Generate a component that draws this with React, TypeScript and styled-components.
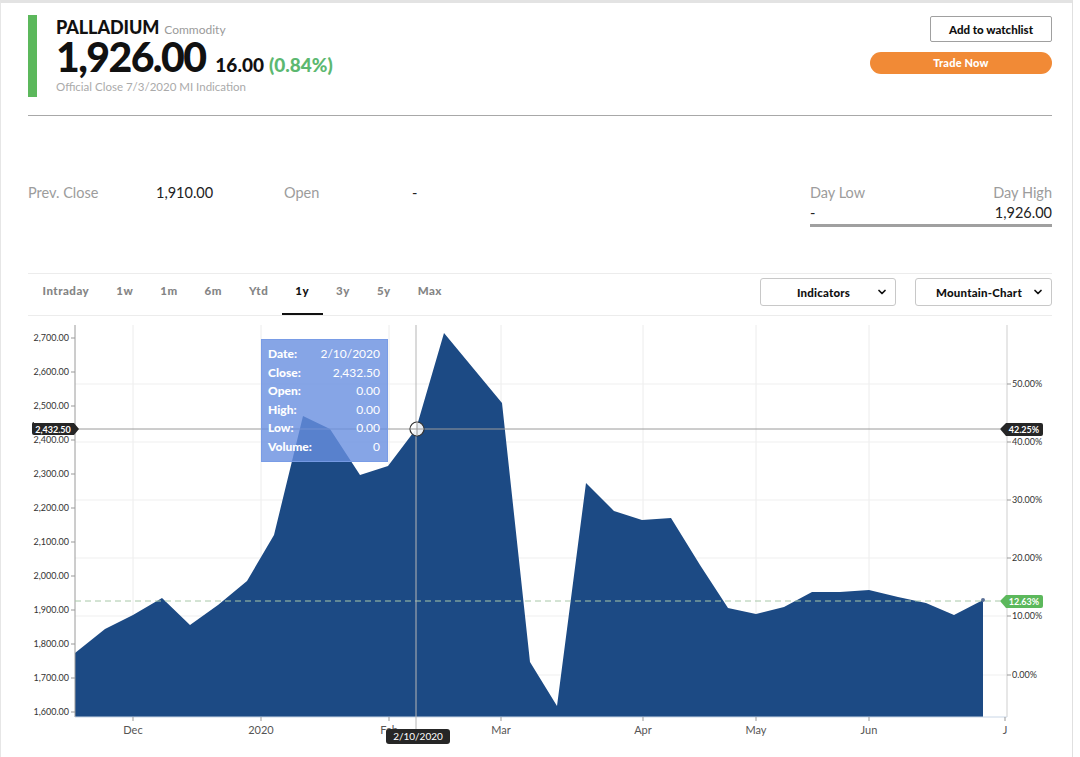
import React from "react";
import styled, { createGlobalStyle } from "styled-components";
import { ChevronDown } from "lucide-react";

const GlobalStyle = createGlobalStyle`
  html, body {
    margin: 0;
    padding: 0;
    background: #fff;
  }
  body {
    font-family: Lato, "Open Sans", sans-serif;
    color: #111;
  }
`;

const Frame = styled.div`
  width: 1073px;
  height: 757px;
  box-sizing: border-box;
  border-top: 3px solid #e3e3e3;
  border-left: 1px solid #e6e6e6;
  border-right: 1px solid #e0e0e0;
  padding: 0 20px 0 27px;
  overflow: hidden;
`;

const Header = styled.header`
  display: flex;
  justify-content: space-between;
  height: 113px;
  box-sizing: border-box;
  padding-top: 12px;
  border-bottom: 1px solid #a8a8a8;
`;

const Quote = styled.div`
  display: flex;
  gap: 19px;
`;

const AccentBar = styled.div`
  width: 9px;
  height: 82px;
  background: #5cb85c;
`;

const Titles = styled.div`
  display: flex;
  flex-direction: column;
`;

const NameRow = styled.div`
  display: flex;
  align-items: baseline;
  gap: 5px;
  margin-top: 1px;
  height: 22px;
  line-height: 22px;
`;

const Name = styled.span`
  font-size: 18px;
  font-weight: 900;
  letter-spacing: -0.1px;
`;

const Kind = styled.span`
  font-size: 12px;
  line-height: 1;
  color: #9a9a9a;
`;

const PriceRow = styled.div`
  display: flex;
  align-items: baseline;
  gap: 10px;
  height: 38px;
  line-height: 38px;
`;

const Price = styled.span`
  font-size: 41px;
  font-weight: 900;
  letter-spacing: -1.6px;
`;

const Change = styled.span<{ $up?: boolean }>`
  font-size: 19px;
  font-weight: 900;
  line-height: 1;
  color: ${(p) => (p.$up ? "#5cb870" : "#111")};
  margin-left: ${(p) => (p.$up ? "-5px" : "0")};
`;

const Note = styled.div`
  font-size: 11.5px;
  line-height: 14px;
  color: #aaa;
  margin-top: 4px;
`;

const Actions = styled.div`
  display: flex;
  flex-direction: column;
  align-items: flex-end;
  gap: 10px;
  padding-top: 1px;
`;

const WatchButton = styled.button`
  width: 122px;
  height: 26px;
  border: 1px solid #a0a0a0;
  border-radius: 2px;
  background: #fff;
  font-family: Lato, sans-serif;
  font-size: 11.5px;
  font-weight: 900;
  color: #111;
  padding: 0;
`;

const TradeButton = styled.button`
  width: 182px;
  height: 22px;
  border: none;
  border-radius: 11px;
  background: #f18a36;
  font-family: Lato, sans-serif;
  font-size: 11px;
  font-weight: 900;
  letter-spacing: 0.2px;
  color: #fff;
  padding: 0 0 1px;
`;

const Stats = styled.section`
  display: flex;
  justify-content: space-between;
  height: 157px;
  box-sizing: border-box;
  padding-top: 67px;
`;

const StatGrid = styled.div`
  display: grid;
  grid-template-columns: repeat(4, 128px);
  font-size: 14.5px;
  line-height: 20px;
  height: 20px;
`;

const StatText = styled.span<{ $label?: boolean }>`
  color: ${(p) => (p.$label ? "#9c9c9c" : "#222")};
`;

const DayRange = styled.div`
  width: 242px;
  font-size: 14.5px;
  line-height: 20px;
`;

const RangeRow = styled.div`
  display: flex;
  justify-content: space-between;
`;

const RangeBar = styled.div`
  height: 3px;
  margin-top: 1px;
  background: #a0a0a0;
`;

const TabsBar = styled.div`
  display: flex;
  justify-content: space-between;
  height: 43px;
  box-sizing: border-box;
  border-top: 1px solid #ececec;
  border-bottom: 1px solid #ececec;
`;

const Tabs = styled.div`
  display: flex;
  padding-left: 1px;
`;

const Tab = styled.div<{ $active?: boolean }>`
  height: 41px;
  box-sizing: border-box;
  padding: 10px 13.5px 0;
  font-size: 11.5px;
  font-weight: 900;
  letter-spacing: 0.5px;
  line-height: 14px;
  color: ${(p) => (p.$active ? "#111" : "#858585")};
  border-bottom: 2px solid ${(p) => (p.$active ? "#111" : "transparent")};
`;

const Selects = styled.div`
  display: flex;
  gap: 19px;
  padding-top: 4px;
`;

const Select = styled.div<{ $w: number }>`
  width: ${(p) => p.$w}px;
  height: 28px;
  box-sizing: border-box;
  border: 1px solid #c8c8c8;
  border-radius: 3px;
  display: grid;
  grid-template-columns: 1fr auto;
  align-items: center;
  padding: 0 7px 0 10px;
  font-size: 11.5px;
  font-weight: 900;
  letter-spacing: 0.2px;
  color: #111;
  text-align: center;
`;

const ChartWrap = styled.div`
  position: relative;
  height: 441px;
`;

const Tooltip = styled.div`
  position: absolute;
  left: 233px;
  top: 23px;
  width: 127px;
  height: 123px;
  box-sizing: border-box;
  padding: 5px 7px 0 6px;
  background: rgba(104, 142, 224, 0.8);
  border: 1px solid rgba(120, 155, 230, 0.9);
  color: #fff;
  font-size: 12px;
  font-weight: 900;
  line-height: 18.5px;
`;

const TipRow = styled.div`
  display: flex;
  justify-content: space-between;
`;

const TipValue = styled.span`
  font-weight: 400;
`;

const points: [number, number][] = [
  [75, 653], [105, 629], [133, 615], [162, 598], [190, 625], [218, 605],
  [247, 581], [274, 535], [303, 416], [330, 429], [360, 475], [388, 466],
  [416, 429], [444, 333], [502, 403], [530, 662], [557, 706], [586, 483],
  [614, 511], [642, 520], [671, 518], [700, 565], [728, 608], [756, 614],
  [784, 607], [812, 592], [840, 592], [869, 590], [898, 597], [926, 603],
  [954, 615], [983, 600],
];

const leftTicks = [
  "2,700.00", "2,600.00", "2,500.00", "2,400.00", "2,300.00", "2,200.00",
  "2,100.00", "2,000.00", "1,900.00", "1,800.00", "1,700.00", "1,600.00",
];

const rightTicks: [string, number][] = [
  ["50.00%", 384], ["40.00%", 442], ["30.00%", 500],
  ["20.00%", 558], ["10.00%", 616], ["0.00%", 675],
];

const months: [string, number][] = [
  ["Dec", 133], ["2020", 261], ["Feb", 389], ["Mar", 501],
  ["Apr", 643], ["May", 756], ["Jun", 869], ["J", 1005],
];

const tipRows: [string, string][] = [
  ["Date:", "2/10/2020"], ["Close:", "2,432.50"], ["Open:", "0.00"],
  ["High:", "0.00"], ["Low:", "0.00"], ["Volume:", "0"],
];

const Chart = () => {
  const area =
    "M75,717 " + points.map(([x, y]) => `L${x},${y}`).join(" ") + " L983,717 Z";
  return (
    <svg width={1024} height={441} viewBox="28 316 1024 441" style={{ display: "block" }}>
      {months.slice(0, 7).map(([m, x]) => (
        <line key={m} x1={x} y1={325} x2={x} y2={717} stroke="#ececec" />
      ))}
      {rightTicks.map(([t, y]) => (
        <line key={t} x1={75} y1={y} x2={1007} y2={y} stroke="#efefef" />
      ))}
      <path d={area} fill="#1c4a84" />
      <circle cx={983} cy={600} r={2} fill="#5a6f96" />

      <line x1={75} y1={325} x2={75} y2={717} stroke="#9a9a9a" />
      <line x1={1007} y1={325} x2={1007} y2={717} stroke="#cfcfcf" />
      <line x1={75} y1={717} x2={1007} y2={717} stroke="#c9d6e6" />

      <g fontFamily="Lato, sans-serif" fontSize={9} fill="#333">
        {leftTicks.map((t, i) => {
          const y = 338 + i * 34;
          return (
            <g key={t}>
              <line x1={71} y1={y} x2={75} y2={y} stroke="#999" />
              <text x={69} y={y + 3} textAnchor="end">{t}</text>
            </g>
          );
        })}
        {rightTicks.map(([t, y]) => (
          <g key={t}>
            <line x1={1007} y1={y} x2={1011} y2={y} stroke="#999" />
            <text x={1012} y={y + 3}>{t}</text>
          </g>
        ))}
      </g>

      <g fontFamily="Lato, sans-serif" fontSize={11} fill="#555" textAnchor="middle">
        {months.map(([m, x]) => (
          <g key={m}>
            <line x1={x} y1={717} x2={x} y2={721} stroke="#999" />
            <text x={x} y={734}>{m}</text>
          </g>
        ))}
      </g>

      <line x1={75} y1={601} x2={1000} y2={601} stroke="#a8c8a8" strokeDasharray="6 4" />

      <line x1={75} y1={429} x2={1000} y2={429} stroke="#9a9a9a" />
      <line x1={416} y1={325} x2={416} y2={729} stroke="#b5b5b5" />
      <circle cx={417} cy={429} r={7} fill="rgba(255,255,255,0.9)" stroke="#333" strokeWidth={1.2} />
      <line x1={410} y1={429} x2={424} y2={429} stroke="#9a9a9a" />
      <line x1={417} y1={422} x2={417} y2={436} stroke="#9a9a9a" />

      <g fontFamily="Lato, sans-serif" fontSize={9} fontWeight={700} fill="#fff" textAnchor="middle">
        <path d="M34,423 h40 l5,6 l-5,6 h-40 q-2,0 -2,-2 v-9 q0,-2 2,-2 z" fill="#262626" />
        <text x={53} y={432.5}>2,432.50</text>
        <path d="M1000,429 l6,-6 h35 q2,0 2,2 v9 q0,2 -2,2 h-35 z" fill="#262626" />
        <text x={1024} y={432.5}>42.25%</text>
        <path d="M1000,601 l6,-6 h35 q2,0 2,2 v9 q0,2 -2,2 h-35 z" fill="#5cb85c" />
        <text x={1024} y={604.5}>12.63%</text>
        <rect x={386} y={729} width={64} height={15} rx={3} fill="#262626" />
        <text x={418} y={740} fontSize={10} fontWeight={400}>2/10/2020</text>
      </g>
    </svg>
  );
};

const tabs = ["Intraday", "1w", "1m", "6m", "Ytd", "1y", "3y", "5y", "Max"];

export default function App() {
  return (
    <>
      <GlobalStyle />
      <Frame>
        <Header>
          <Quote>
            <AccentBar />
            <Titles>
              <NameRow>
                <Name>PALLADIUM</Name>
                <Kind>Commodity</Kind>
              </NameRow>
              <PriceRow>
                <Price>1,926.00</Price>
                <Change>16.00</Change>
                <Change $up>(0.84%)</Change>
              </PriceRow>
              <Note>Official Close 7/3/2020 MI Indication</Note>
            </Titles>
          </Quote>
          <Actions>
            <WatchButton>Add to watchlist</WatchButton>
            <TradeButton>Trade Now</TradeButton>
          </Actions>
        </Header>

        <Stats>
          <StatGrid>
            <StatText $label>Prev. Close</StatText>
            <StatText>1,910.00</StatText>
            <StatText $label>Open</StatText>
            <StatText>-</StatText>
          </StatGrid>
          <DayRange>
            <RangeRow>
              <StatText $label>Day Low</StatText>
              <StatText $label>Day High</StatText>
            </RangeRow>
            <RangeRow>
              <StatText>-</StatText>
              <StatText>1,926.00</StatText>
            </RangeRow>
            <RangeBar />
          </DayRange>
        </Stats>

        <TabsBar>
          <Tabs>
            {tabs.map((t) => (
              <Tab key={t} $active={t === "1y"}>{t}</Tab>
            ))}
          </Tabs>
          <Selects>
            <Select $w={136}>
              <span>Indicators</span>
              <ChevronDown size={12} strokeWidth={3.5} />
            </Select>
            <Select $w={137}>
              <span>Mountain-Chart</span>
              <ChevronDown size={12} strokeWidth={3.5} />
            </Select>
          </Selects>
        </TabsBar>

        <ChartWrap>
          <Chart />
          <Tooltip>
            {tipRows.map(([k, v]) => (
              <TipRow key={k}>
                <span>{k}</span>
                <TipValue>{v}</TipValue>
              </TipRow>
            ))}
          </Tooltip>
        </ChartWrap>
      </Frame>
    </>
  );
}
